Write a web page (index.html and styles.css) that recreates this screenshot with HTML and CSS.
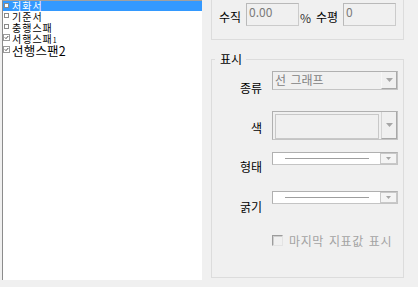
FILE: index.html
```html
<!DOCTYPE html>
<html lang="ko">
<head>
<meta charset="utf-8">
<link rel="stylesheet" href="styles.css">
</head>
<body>
<div class="list">
  <div class="item sel"><span class="cb"></span><span class="txt">저화서</span></div>
  <div class="item"><span class="cb"></span><span class="txt">기준서</span></div>
  <div class="item"><span class="cb"></span><span class="txt">충행스패</span></div>
  <div class="item"><span class="cb on"><svg viewBox="0 0 5 5" width="5" height="5"><path d="M0.8 2.4 L2 3.6 L4.3 1" fill="none" stroke="#333" stroke-width="0.9"/></svg></span><span class="txt">서행스패<small class="sub">1</small></span></div>
  <div class="item big"><span class="cb on"><svg viewBox="0 0 5 5" width="5" height="5"><path d="M0.8 2.4 L2 3.6 L4.3 1" fill="none" stroke="#333" stroke-width="0.9"/></svg></span><span class="txt">선행스팬2</span></div>
</div>
<div class="side">
  <div class="group top">
    <span class="lbl l-v">수직</span>
    <div class="input">0.00</div>
    <span class="pct">%</span>
    <span class="lbl l-h">수평</span>
    <div class="input">0</div>
  </div>
  <fieldset class="group disp">
    <legend>표시</legend>
    <div class="grid">
      <label class="rl r1">종류</label>
      <div class="combo c1">
        <span class="ctext">선 그래프</span>
        <span class="btn"><svg width="7" height="4" viewBox="0 0 7 4"><path d="M0 0H7L3.5 4Z" fill="#a6a6a6"/></svg></span>
      </div>
      <label class="rl r2">색</label>
      <div class="combo c2">
        <span class="swatch"></span>
        <span class="btn"><svg width="7" height="4" viewBox="0 0 7 4"><path d="M0 0H7L3.5 4Z" fill="#a6a6a6"/></svg></span>
      </div>
      <label class="rl r3">형태</label>
      <div class="combo c3">
        <span class="lineart"><span class="ln"></span></span>
        <span class="btn sm"><svg width="5" height="3" viewBox="0 0 5 3"><path d="M0 0H5L2.5 3Z" fill="#a6a6a6"/></svg></span>
      </div>
      <label class="rl r4">굵기</label>
      <div class="combo c3">
        <span class="lineart"><span class="ln"></span></span>
        <span class="btn sm"><svg width="5" height="3" viewBox="0 0 5 3"><path d="M0 0H5L2.5 3Z" fill="#a6a6a6"/></svg></span>
      </div>
      <span class="empty"></span>
      <div class="check"><span class="box"></span><span class="ctl">마지막 지표값 표시</span></div>
    </div>
  </fieldset>
</div>
</body>
</html>
```
FILE: styles.css
```css
* { box-sizing: border-box; }
html, body { margin: 0; padding: 0; }
body {
  width: 418px;
  height: 287px;
  overflow: hidden;
  background: #f0f0f0;
  display: flex;
  align-items: flex-start;
  font-family: "Noto Sans CJK KR", "Noto Sans", sans-serif;
  font-size: 12px;
  color: #000;
}
.list {
  margin-left: 2px;
  width: 200px;
  height: 280px;
  background: #fff;
  border-left: 1px solid #8c8c8c;
  border-top: 1px solid #a0a0a0;
  font-size: 10px;
  letter-spacing: 1px;
  line-height: 11px;
}
.item {
  height: 11px;
  display: flex;
  align-items: flex-start;
  white-space: nowrap;
}
.item.sel {
  height: 10px;
  line-height: 10px;
  background: #3399ff;
  color: #fff;
}
.item.big {
  font-size: 12.5px;
  line-height: 14px;
  letter-spacing: 0.2px;
  height: 15px;
}
.cb {
  width: 5px;
  height: 5px;
  margin: 2px 3px 0 1px;
  background: #fff;
  border: 1px solid #8a8a8a;
  flex: none;
}
.cb.on { border: none; outline: 1px solid #9a9a9a; }
.cb svg { display: block; }
.item.big .cb { margin-top: 3px; }
.txt { display: inline-block; }
.sub { font-size: 7px; letter-spacing: 0; line-height: 0; }

.side {
  padding-left: 9px;
  display: flex;
  flex-direction: column;
}
.group {
  width: 193px;
  border: 1px solid #dcdcdc;
}
.group.top {
  height: 40px;
  border-top: none;
  display: flex;
  align-items: flex-start;
  padding: 3px 0 0 7px;
}
.lbl { margin-top: 7px; line-height: 14px; }
.l-v { width: 24px; margin-right: 3px; }
.input {
  width: 53px;
  height: 23px;
  border: 1px solid #cbcbcb;
  border-top-color: #b9b9b9;
  border-left-color: #b9b9b9;
  background: #f0f0f0;
  color: #7a7a7a;
  line-height: 14px;
  padding: 1px 0 0 2px;
}
.pct { margin: 8px 0 0 1px; width: 16px; line-height: 14px; color: #333; }
.l-h { width: 24px; margin-right: 3px; }

.disp {
  margin: 12px 0 0 0;
  padding: 5px 0 0 0;
  height: 226px;
  min-width: 0;
}
.disp legend {
  margin-left: 3px;
  padding: 0 4px 0 5px;
  line-height: 14px;
}
.grid {
  display: grid;
  grid-template-columns: 50px 126px;
  grid-template-rows: 40px 41px 39px 44px auto;
  column-gap: 10px;
  align-items: start;
}
.rl { text-align: right; line-height: 14px; }
.r1 { margin-top: 10px; }
.r2 { margin-top: 10px; }
.r3 { margin-top: 8px; }
.r4 { margin-top: 9px; }

.combo {
  display: flex;
  border: 1px solid #c4c4c4;
  border-top-color: #b0b0b0;
  border-left-color: #b0b0b0;
}
.combo .btn {
  margin-left: auto;
  width: 16px;
  display: flex;
  align-items: center;
  justify-content: center;
  border-left: 1px solid #f7f7f7;
  border-right: 1px solid #a8a8a8;
  border-bottom: 1px solid #a8a8a8;
}
.combo .btn svg { display: block; }
.c1 {
  height: 19px;
  background: #f0f0f0;
}
.ctext {
  color: #828282;
  line-height: 14px;
  padding: 1px 0 0 2px;
  word-spacing: 1px;
}
.c2 {
  height: 29px;
  background: #f0f0f0;
  padding: 2px 0 0 2px;
}
.c2 .swatch {
  width: 104px;
  height: 25px;
  border: 1px solid #c8c8c8;
}
.c2 .btn { border-left: 1px solid #d4d4d4; margin-top: -2px; }
.c3 {
  height: 13px;
  background: #fff;
}
.lineart {
  flex: 1;
  display: flex;
  align-items: center;
  padding-left: 12px;
}
.ln {
  width: 84px;
  height: 1px;
  background: #9e9e9e;
}
.c3 .btn.sm {
  width: 17px;
  background: #f4f4f4;
  border: 1px solid #c8c8c8;
}
.check {
  display: flex;
  align-items: flex-start;
}
.check .box {
  width: 11px;
  height: 11px;
  border: 1px solid #e3e3e3;
  border-top-color: #9c9c9c;
  border-left-color: #9c9c9c;
  background: #f0f0f0;
  box-shadow: inset 1px 1px 0 #cfcfcf;
  margin-right: 6px;
}
.ctl {
  color: #a3a3a3;
  line-height: 12px;
  letter-spacing: 0.6px;
  word-spacing: 1px;
}
```
